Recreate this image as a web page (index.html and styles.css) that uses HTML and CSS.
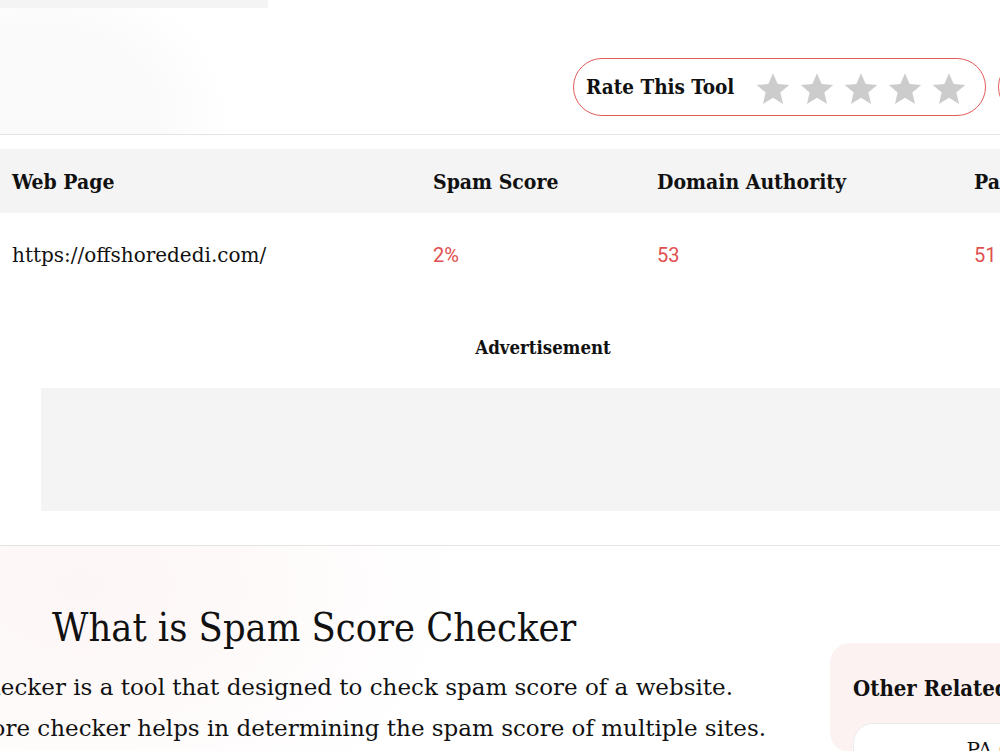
FILE: index.html
```html
<!DOCTYPE html>
<html lang="en">
<head>
    <meta charset="UTF-8">
    <title>Spam Score Checker</title>
    <link rel="stylesheet" href="styles.css">
</head>
<body>
<div class="page">
    <div class="top-strip"></div>

    <!-- Rating bar -->
    <section class="tool-head">
        <div class="rate-row">
            <div class="rate-pill">
                <span class="rate-label">Rate This Tool</span>
                <div class="stars">
                    <svg class="star" viewBox="0 0 24 24"><path d="M12 1.5l3.1 7.2 7.7.6-5.9 5.1 1.8 7.6L12 17.9l-6.7 4.1 1.8-7.6-5.9-5.1 7.7-.6z"/></svg>
                    <svg class="star" viewBox="0 0 24 24"><path d="M12 1.5l3.1 7.2 7.7.6-5.9 5.1 1.8 7.6L12 17.9l-6.7 4.1 1.8-7.6-5.9-5.1 7.7-.6z"/></svg>
                    <svg class="star" viewBox="0 0 24 24"><path d="M12 1.5l3.1 7.2 7.7.6-5.9 5.1 1.8 7.6L12 17.9l-6.7 4.1 1.8-7.6-5.9-5.1 7.7-.6z"/></svg>
                    <svg class="star" viewBox="0 0 24 24"><path d="M12 1.5l3.1 7.2 7.7.6-5.9 5.1 1.8 7.6L12 17.9l-6.7 4.1 1.8-7.6-5.9-5.1 7.7-.6z"/></svg>
                    <svg class="star" viewBox="0 0 24 24"><path d="M12 1.5l3.1 7.2 7.7.6-5.9 5.1 1.8 7.6L12 17.9l-6.7 4.1 1.8-7.6-5.9-5.1 7.7-.6z"/></svg>
                </div>
            </div>
            <div class="rate-pill share-pill"></div>
        </div>
    </section>

    <!-- Results table -->
    <table class="results">
        <colgroup>
            <col class="col-page">
            <col class="col-spam">
            <col class="col-da">
            <col class="col-pa">
        </colgroup>
        <thead>
            <tr>
                <th>Web Page</th>
                <th>Spam Score</th>
                <th>Domain Authority</th>
                <th>Page Authority</th>
            </tr>
        </thead>
        <tbody>
            <tr>
                <td>https://offshorededi.com/</td>
                <td class="num">2%</td>
                <td class="num">53</td>
                <td class="num">51</td>
            </tr>
        </tbody>
    </table>

    <!-- Ad slot -->
    <section class="ad-area">
        <div class="ad-label">Advertisement</div>
        <div class="ad-box"></div>
    </section>

    <!-- Article + sidebar -->
    <section class="content">
        <div class="article">
            <h2>What is Spam Score Checker</h2>
            <p class="intro">
                <span class="line line-1"><span>Spam Score Checker is a tool that designed to check spam score of a website.</span></span>
                <span class="line line-2"><span>Spam score checker helps in determining the spam score of multiple sites.</span></span>
            </p>
        </div>
        <aside class="related">
            <h3>Other Related Tools</h3>
            <div class="related-item">PA Checker</div>
        </aside>
    </section>
</div>
</body>
</html>
```

FILE: styles.css
```css
/* Tool page layout */
body {
  margin: 0;
  font-family: "DejaVu Serif", serif;
  color: #111;
  background: #fff;
  overflow: hidden;
}
.page {
  width: 1000px;
  height: 751px;
  overflow: hidden;
}
.top-strip {
  width: 268px;
  height: 8px;
  background: #f4f4f4;
}

/* Rating header */
.tool-head {
  height: 126px;
  border-bottom: 1px solid #e4e4e4;
  background: radial-gradient(ellipse 190px 150px at 40px 110px, #fafafa 0%, #fafafa 60%, rgba(255,255,255,0) 100%);
}
.rate-row {
  display: flex;
  gap: 12px;
  padding: 50px 0 0 573px;
  width: 1200px;
}
.rate-pill {
  display: flex;
  align-items: center;
  flex-shrink: 0;
  box-sizing: border-box;
  height: 58px;
  width: 413px;
  border: 1px solid #e25b5b;
  border-radius: 30px;
  padding: 0 12px;
}
.rate-pill.share-pill {
  width: 120px;
}
.rate-label {
  font-family: "DejaVu Serif Condensed", "DejaVu Serif", serif;
  font-size: 20.5px;
  font-weight: bold;
  margin-right: 21px;
}
.stars {
  display: flex;
  gap: 8px;
  margin-top: 4px;
}
.star {
  width: 36px;
  height: 36px;
  fill: #cccccc;
}

/* Results table */
.results {
  margin-top: 14px;
  width: 1200px;
  border-collapse: collapse;
  table-layout: fixed;
}
.col-page { width: 421px; }
.col-spam { width: 224px; }
.col-da { width: 317px; }
.col-pa { width: 238px; }
.results th {
  background: #f4f4f4;
  height: 64px;
  padding: 0 12px;
  text-align: left;
  font-family: "DejaVu Serif Condensed", "DejaVu Serif", serif;
  font-size: 21px;
  font-weight: bold;
  white-space: nowrap;
}
.results td {
  height: 84px;
  padding: 0 12px;
  font-size: 20px;
  white-space: nowrap;
}
.results td.num {
  color: #e04f4f;
  font-family: Roboto, "Liberation Sans", sans-serif;
}

/* Ad slot */
.ad-area {
  width: 1004px;
  padding: 40px 0 0 41px;
  height: 208px;
  border-bottom: 1px solid #e4e4e4;
}
.ad-label {
  text-align: center;
  font-family: "DejaVu Serif Condensed", "DejaVu Serif", serif;
  font-size: 18.5px;
  font-weight: bold;
  height: 22px;
  margin-bottom: 29px;
}
.ad-box {
  height: 123px;
  background: #f4f4f4;
}

/* Article area */
.content {
  display: flex;
  height: 206px;
  background: radial-gradient(ellipse 380px 260px at 80px 40px, #fdf6f6 0%, #fefafa 50%, rgba(255,255,255,0) 100%);
}
.article {
  width: 830px;
  flex-shrink: 0;
}
.article h2 {
  margin: 57px 0 0 52px;
  font-family: "DejaVu Serif Condensed", "DejaVu Serif", serif;
  font-size: 39.4px;
  font-weight: normal;
  line-height: 48px;
}
.intro {
  margin: 16px 0 0;
  font-size: 23px;
  line-height: 41px;
  white-space: nowrap;
}
/* lines run in from the left edge, so pin their ends */
.line {
  display: flex;
  justify-content: flex-end;
}
.line-1 { width: 733px; }
.line-2 { width: 766px; }
.related {
  width: 344px;
  flex-shrink: 0;
  margin-top: 97px;
  background: #fcf2f2;
  border-radius: 20px;
  padding: 32px 23px;
}
.related h3 {
  margin: 0;
  font-family: "DejaVu Serif Condensed", "DejaVu Serif", serif;
  font-size: 22px;
  font-weight: bold;
  white-space: nowrap;
}
.related-item {
  margin-top: 22px;
  background: #fff;
  border: 1px solid #ebebeb;
  border-radius: 20px;
  height: 60px;
  padding-top: 14px;
  text-align: center;
  font-size: 20px;
}
```
